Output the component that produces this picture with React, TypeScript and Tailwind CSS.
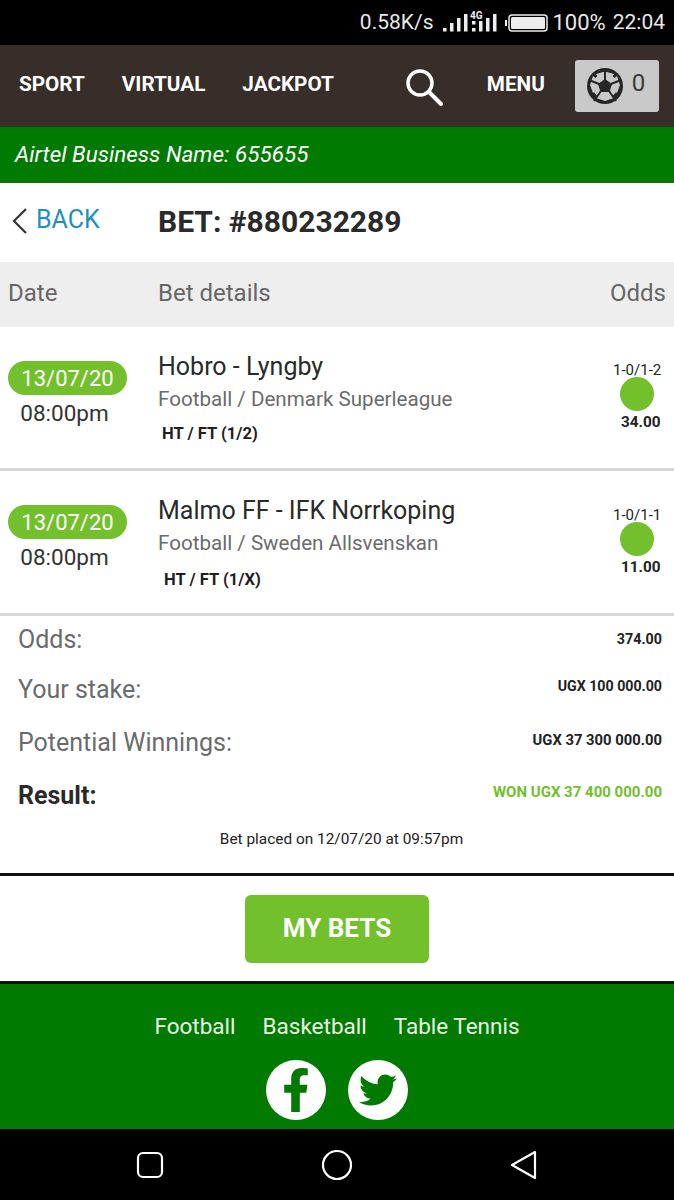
import { FaFacebookF, FaTwitter } from "react-icons/fa"

const BETS = [
  { teams: "Hobro - Lyngby", league: "Football / Denmark Superleague", market: "HT / FT (1/2)", marketCls: "pl-[4px] mt-[11px]", score: "1-0/1-2", odds: "34.00", scorePt: "pt-[34px]", height: "h-[144px]" },
  { teams: "Malmo FF - IFK Norrkoping", league: "Football / Sweden Allsvenskan", market: "HT / FT (1/X)", marketCls: "pl-[6px] mt-[13px]", score: "1-0/1-1", odds: "11.00", scorePt: "pt-[35px]", height: "h-[145px]" },
]

const SUMMARY = [
  { label: "Odds:", value: "374.00", rowCls: "h-[46px]", valueCls: "text-[14.3px]" },
  { label: "Your stake:", value: "UGX 100 000.00", rowCls: "h-[53px]", valueCls: "text-[14.2px] -mt-[6px]" },
  { label: "Potential Winnings:", value: "UGX 37 300 000.00", rowCls: "h-[53px]", valueCls: "text-[14.8px] -mt-[4px]" },
]

function StatusBar() {
  return (
    <div className="h-[45px] bg-black flex items-center justify-end pr-[9px] text-[#e8e8e8] text-[21px] shrink-0">
      <span>0.58K/s</span>
      <svg width="54" height="28" viewBox="0 0 54 28" className="ml-[10px]" fill="#eee">
        <rect x="0" y="19" width="3.5" height="3.5" />
        <rect x="7" y="14" width="3.5" height="8.5" />
        <rect x="14" y="9" width="3.5" height="13.5" />
        <rect x="21" y="5" width="3.5" height="17.5" />
        <rect x="29" y="19" width="3.5" height="3.5" />
        <rect x="29" y="12" width="3.5" height="3.5" />
        <rect x="36" y="12" width="3.5" height="10.5" />
        <rect x="43" y="9" width="3.5" height="13.5" />
        <rect x="50" y="5" width="3.5" height="17.5" />
        <text x="27" y="10" fontSize="10" fontWeight="700" fill="#eee">4G</text>
      </svg>
      <svg width="44" height="20" viewBox="0 0 44 20" className="ml-[8px]">
        <rect x="0" y="7" width="2" height="6" fill="#eee" />
        <rect x="4" y="2" width="38" height="16" rx="3" fill="none" stroke="#eee" strokeWidth="1.5" />
        <rect x="6" y="4" width="34" height="12" rx="1.5" fill="#eee" />
      </svg>
      <span className="ml-[3px] text-[22px]">100%</span>
      <span className="ml-[7px]">22:04</span>
    </div>
  )
}

function Ball() {
  return (
    <svg width="36" height="36" viewBox="0 0 36 36">
      <circle cx="18" cy="18" r="18" fill="#262626" />
      <circle cx="18" cy="18" r="12.5" fill="#c9c9c9" />
      <g fill="#c9c9c9">
        <polygon points="9,6 18,3.5 27,6 24,11 12,11" />
        <polygon points="30,8 33,17 30,25 25,21 25,12" />
        <polygon points="6,8 3,17 6,25 11,21 11,12" />
        <polygon points="12,24 24,24 27,30 18,33 9,30" />
      </g>
      <g stroke="#262626" strokeWidth="2">
        <path d="M18 12 V2" />
        <path d="M24 16 L34 12" />
        <path d="M12 16 L2 12" />
        <path d="M22 23 L29 33" />
        <path d="M14 23 L7 33" />
      </g>
      <polygon points="18,11 25,16 22.5,24 13.5,24 11,16" fill="#262626" />
    </svg>
  )
}

function TopNav() {
  return (
    <div className="h-[82px] bg-[#372e29] flex items-center text-white text-[20.7px] font-bold shrink-0">
      <span className="ml-[19px] -mt-[3px]">SPORT</span>
      <span className="ml-[37px] -mt-[3px]">VIRTUAL</span>
      <span className="ml-[37px] -mt-[3px]">JACKPOT</span>
      <svg width="42" height="42" viewBox="0 0 42 42" fill="none" stroke="#fff" className="ml-[69px] mt-[4px]">
        <circle cx="17" cy="16" r="12" strokeWidth="3.5" />
        <path d="M26 25 L38 37" strokeWidth="4" strokeLinecap="round" />
      </svg>
      <span className="ml-[42px] -mt-[3px]">MENU</span>
      <div className="ml-[30px] w-[84px] h-[52px] rounded-[3px] bg-[#c9c9c9] flex items-center pl-[12px] gap-[9px]">
        <Ball />
        <span className="text-[24px] font-normal text-[#3a3a3a] -mt-[6px]">0</span>
      </div>
    </div>
  )
}

function BetRow({ bet }: { bet: (typeof BETS)[number] }) {
  return (
    <div className={`${bet.height} flex border-b-[3px] border-[#d8d8d8] shrink-0`}>
      <div className="w-[135px] pl-[8px] pt-[34px] shrink-0">
        <div className="w-[119px] h-[34px] rounded-full bg-[#72c02c] flex items-center justify-center text-white text-[22px]">13/07/20</div>
        <div className="w-[113px] text-center text-[22.5px] text-[#333] mt-[4px] leading-[28px]">08:00pm</div>
      </div>
      <div className="flex-1 pl-[23px] pt-[23px]">
        <div className="text-[25px] leading-[34px] text-[#2a2a2a]">{bet.teams}</div>
        <div className="text-[20.6px] leading-[28px] text-[#6b6b6b] mt-[1px]">{bet.league}</div>
        <div className={`${bet.marketCls} text-[16.6px] font-bold leading-[20px] text-[#1f1f1f]`}>{bet.market}</div>
      </div>
      <div className={`w-[62px] ${bet.scorePt} flex flex-col items-start shrink-0 text-[#222]`}>
        <div className="text-[15px] leading-[18px] pl-[1px]">{bet.score}</div>
        <div className="w-[34px] h-[34px] rounded-full bg-[#72c02c] ml-[8px] -mt-[2px]" />
        <div className="text-[15.3px] font-bold leading-[20px] ml-[9px] mt-[1px]">{bet.odds}</div>
      </div>
    </div>
  )
}

function Summary() {
  return (
    <div className="h-[257px] pl-[18px] pr-[12px] pt-[1px] shrink-0">
      {SUMMARY.map((r) => (
        <div key={r.label} className={`${r.rowCls} flex justify-between items-center`}>
          <span className="text-[25px] text-[#6b6b6b]">{r.label}</span>
          <span className={`${r.valueCls} font-bold text-[#222]`}>{r.value}</span>
        </div>
      ))}
      <div className="h-[53px] flex justify-between items-center">
        <span className="text-[25px] font-bold text-[#2a2a2a]">Result:</span>
        <span className="text-[15px] font-bold text-[#72c02c] -mt-[6px]">WON UGX 37 400 000.00</span>
      </div>
      <div className="text-center text-[15.4px] text-[#222] pl-[3px] mt-[6px]">Bet placed on 12/07/20 at 09:57pm</div>
    </div>
  )
}

export default function App() {
  return (
    <div className="w-[674px] h-[1200px] flex flex-col overflow-hidden bg-white font-['Roboto',sans-serif]">
      <StatusBar />
      <TopNav />
      <div className="h-[56px] bg-[#017a01] flex items-center pl-[15px] text-white text-[22.5px] italic shrink-0">Airtel Business Name: 655655</div>

      <div className="h-[79px] flex items-center shrink-0">
        <svg width="18" height="28" viewBox="0 0 18 28" fill="none" stroke="#333" strokeWidth="2.2" className="ml-[11px] -mt-[3px]">
          <path d="M15 2 L3 14 L15 26" />
        </svg>
        <span className="ml-[7px] w-[122px] text-[25px] text-[#1e8fc4] -mt-[6px]">BACK</span>
        <span className="text-[30px] font-bold text-[#2a2a2a] -mt-[3px]">BET: #880232289</span>
      </div>

      <div className="h-[65px] bg-[#eeeeee] flex items-center text-[24px] text-[#666] pl-[8px] pr-[8px] pb-[4px] shrink-0">
        <span className="w-[150px]">Date</span>
        <span className="flex-1">Bet details</span>
        <span>Odds</span>
      </div>

      {BETS.map((bet) => (
        <BetRow key={bet.teams} bet={bet} />
      ))}

      <Summary />

      <div className="h-[111px] border-y-[3px] border-[#111] flex items-center justify-center shrink-0">
        <button className="w-[184px] h-[68px] rounded-[6px] bg-[#72c02c] text-white text-[26px] font-bold">MY BETS</button>
      </div>

      <div className="flex-1 bg-[#017a01] flex flex-col items-center">
        <div className="flex gap-[27px] text-[#eaf5e6] text-[22.5px] mt-[26px] leading-[32px]">
          <span>Football</span>
          <span>Basketball</span>
          <span>Table Tennis</span>
        </div>
        <div className="flex gap-[22px] mt-[18px]">
          <div className="w-[60px] h-[60px] rounded-full bg-white flex items-center justify-center text-[#017a01] text-[44px]"><FaFacebookF /></div>
          <div className="w-[60px] h-[60px] rounded-full bg-white flex items-center justify-center text-[#017a01] text-[38px]"><FaTwitter /></div>
        </div>
      </div>

      <div className="h-[71px] bg-black flex items-center shrink-0">
        <svg width="28" height="28" viewBox="0 0 28 28" fill="none" stroke="#fff" strokeWidth="2.2" className="ml-[136px]">
          <rect x="2" y="2" width="24" height="24" rx="5" />
        </svg>
        <svg width="32" height="32" viewBox="0 0 32 32" fill="none" stroke="#fff" strokeWidth="2.2" className="ml-[157px]">
          <circle cx="16" cy="16" r="14" />
        </svg>
        <svg width="30" height="32" viewBox="0 0 30 32" fill="none" stroke="#fff" strokeWidth="2.2" strokeLinejoin="round" className="ml-[156px]">
          <path d="M26 3 L3 16 L26 29 Z" />
        </svg>
      </div>
    </div>
  )
}
